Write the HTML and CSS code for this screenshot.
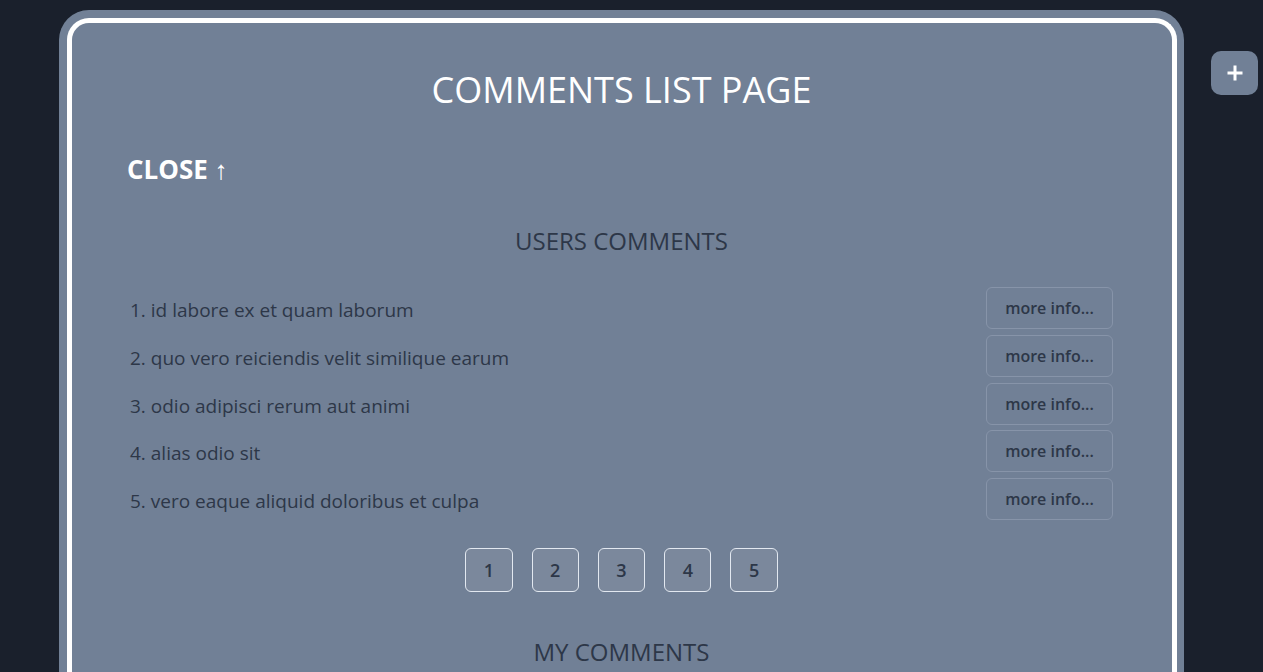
FILE: index.html
```html
<!DOCTYPE html>
<html lang="en">
<head>
<meta charset="utf-8">
<title>Comments List Page</title>
<link rel="stylesheet" href="styles.css">
</head>
<body>
<div class="page">
  <div class="frame">
    <main class="card">
      <h1 class="title">COMMENTS LIST PAGE</h1>
      <div class="close-row"><button class="close">CLOSE ↑</button></div>
      <section class="users">
        <h2 class="section-title">USERS COMMENTS</h2>
        <ol class="list">
          <li class="row"><span class="row-text">1. id labore ex et quam laborum</span><button class="more">more info...</button></li>
          <li class="row"><span class="row-text">2. quo vero reiciendis velit similique earum</span><button class="more">more info...</button></li>
          <li class="row"><span class="row-text">3. odio adipisci rerum aut animi</span><button class="more">more info...</button></li>
          <li class="row"><span class="row-text">4. alias odio sit</span><button class="more">more info...</button></li>
          <li class="row"><span class="row-text">5. vero eaque aliquid doloribus et culpa</span><button class="more">more info...</button></li>
        </ol>
        <div class="pager">
          <button class="page-btn">1</button>
          <button class="page-btn">2</button>
          <button class="page-btn">3</button>
          <button class="page-btn">4</button>
          <button class="page-btn">5</button>
        </div>
      </section>
      <section class="mine">
        <h2 class="section-title">MY COMMENTS</h2>
      </section>
    </main>
  </div>
  <button class="add" aria-label="Add">
    <svg width="18" height="18" viewBox="0 0 18 18"><path d="M9 1.5v15M1.5 9h15" stroke="#fff" stroke-width="3" fill="none"/></svg>
  </button>
</div>
</body>
</html>
```

FILE: styles.css
```css
* { box-sizing: border-box; }
html, body { margin: 0; padding: 0; }
body {
  background: #1a202c;
  font-family: "Open Sans", "Noto Sans", sans-serif;
  color: #2d3748;
  height: 672px;
  overflow: hidden;
}
.page {
  display: flex;
  align-items: flex-start;
  padding: 10px 0 0 59px;
}
.frame {
  width: 1125px;
  background: #718096;
  padding: 8px 7px 0 8px;
  border-radius: 30px 30px 0 0;
}
.card {
  border: 5px solid #fff;
  border-bottom: none;
  border-radius: 22px 22px 0 0;
  background: #718096;
  padding: 45px 56px 40px 55px;
  min-height: 700px;
}
.title {
  margin: 0;
  text-align: center;
  font-weight: 400;
  font-size: 36px;
  line-height: 44px;
  color: #fff;
}
.close-row { margin-top: 39px; }
.close {
  background: none;
  border: none;
  padding: 0;
  font-family: inherit;
  font-weight: 700;
  font-size: 26px;
  line-height: 36px;
  color: #fff;
}
.users { margin-top: 38px; }
.section-title {
  margin: 0;
  text-align: center;
  font-weight: 400;
  font-size: 24px;
  line-height: 32px;
  color: #2d3748;
}
.list {
  list-style: none;
  margin: 30px 0 0;
  padding: 0;
  display: flex;
  flex-direction: column;
  gap: 5.75px;
}
.row {
  display: flex;
  align-items: center;
  justify-content: space-between;
  padding-left: 3px;
}
.row-text {
  font-size: 19px;
  padding-top: 4px;
  color: #2d3748;
}
.more {
  width: 127px;
  height: 42px;
  margin-right: 3px;
  border: 1px solid #8794a9;
  border-radius: 6px;
  background: transparent;
  font-family: inherit;
  font-weight: 600;
  font-size: 16px;
  color: #2d3748;
}
.pager {
  display: flex;
  justify-content: center;
  gap: 19px;
  margin-top: 28px;
}
.page-btn {
  height: 44px;
  padding: 0 17.5px;
  border: 1px solid #e2e8f0;
  border-radius: 6px;
  background: #7b889c;
  font-family: inherit;
  font-weight: 600;
  font-size: 18px;
  color: #2d3748;
}
.mine { margin-top: 44px; }
.add {
  margin: 41px 0 0 27px;
  width: 47px;
  height: 44px;
  border: none;
  border-radius: 10px;
  background: #718096;
  display: flex;
  align-items: center;
  justify-content: center;
  padding: 0;
}
```
